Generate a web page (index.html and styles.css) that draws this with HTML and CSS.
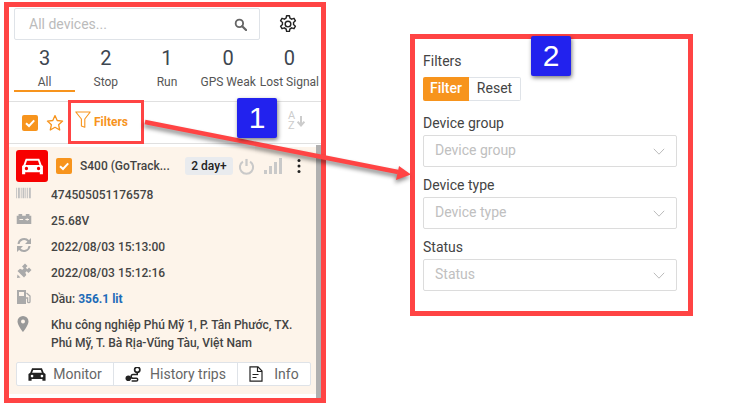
FILE: index.html
```html
<!DOCTYPE html>
<html lang="vi">
<head>
<meta charset="utf-8">
<title>Device filters</title>
<link rel="stylesheet" href="styles.css">
</head>
<body>
<section class="frame left-frame">
  <div class="search-row">
    <div class="search">
      <span class="search-text">All devices...</span>
      <svg class="search-icon" viewBox="0 0 14 14" width="13" height="13"><circle cx="5.800" cy="5.800" r="4" fill="none" stroke="#666" stroke-width="2"/><path d="M8.800 8.800 13 13" stroke="#666" stroke-width="2.400" stroke-linecap="round"/></svg>
    </div>
    <div class="gear-wrap">
      <svg viewBox="0 0 24 24" width="20" height="20" fill="none" stroke="#222" stroke-width="1.700" stroke-linejoin="round"><circle cx="12" cy="12" r="3.400"/><path d="M10.300 2h3.400l.6 3a7.400 7.400 0 0 1 2 1.200l2.900-1 1.700 3-2.300 2a7.400 7.400 0 0 1 0 2.400l2.300 2-1.700 3-2.900-1a7.400 7.400 0 0 1-2 1.200l-.6 3h-3.400l-.6-3a7.400 7.400 0 0 1-2-1.200l-2.900 1-1.700-3 2.300-2a7.400 7.400 0 0 1 0-2.400l-2.300-2 1.700-3 2.900 1a7.400 7.400 0 0 1 2-1.200z"/></svg>
    </div>
  </div>
  <div class="tabs">
    <div class="tab active"><b>3</b><span>All</span></div>
    <div class="tab"><b>2</b><span>Stop</span></div>
    <div class="tab"><b>1</b><span>Run</span></div>
    <div class="tab"><b>0</b><span>GPS Weak</span></div>
    <div class="tab"><b>0</b><span>Lost Signal</span></div>
  </div>
  <div class="toolbar">
    <span class="check"><svg viewBox="0 0 16 16" width="16" height="16"><path d="M4 8.200 7 11l5.200-5.600" fill="none" stroke="#fff" stroke-width="2"/></svg></span>
    <svg class="star" viewBox="0 0 18 18" width="18" height="18"><path d="M9 1.600 11.200 6.500 16.600 7.100 12.600 10.700 13.700 16 9 13.300 4.300 16 5.400 10.700 1.400 7.100 6.800 6.500Z" fill="none" stroke="#f7941d" stroke-width="1.300" stroke-linejoin="round"/></svg>
    <div class="filters-btn">
      <svg viewBox="0 0 16 18" width="16" height="18"><path d="M.8 1h14.400L9.800 8v8.200L6.400 15V8Z" fill="none" stroke="#f7941d" stroke-width="1.100" stroke-linejoin="round"/></svg>
      <span>Filters</span>
    </div>
    <div class="sort">
      <div class="sort-letters"><span>A</span><span>Z</span></div>
      <svg viewBox="0 0 8 11" width="8" height="11"><path d="M4 0v9.500M.6 5.800 4 9.500l3.400-3.700" fill="none" stroke="#ccc" stroke-width="2"/></svg>
    </div>
  </div>
  <div class="list">
    <article class="card">
      <div class="card-head">
        <span class="car-tile"><svg viewBox="0 0 24 24" width="25" height="25"><path fill="#fff" d="M5.500 4.500h13l2.200 6 1.300 1v8h-3v-2H5v2H2v-8l1.300-1zM6.700 6.500 5.300 10.500h13.400l-1.400-4zM6.200 12.300a1.600 1.600 0 1 0 0 3.200 1.600 1.600 0 0 0 0-3.200zm11.600 0a1.600 1.600 0 1 0 0 3.200 1.600 1.600 0 0 0 0-3.200z"/></svg></span>
        <span class="check card-check"><svg viewBox="0 0 16 16" width="16" height="16"><path d="M4 8.200 7 11l5.200-5.600" fill="none" stroke="#fff" stroke-width="2"/></svg></span>
        <span class="name">S400 (GoTrack...</span>
        <span class="badge">2 day+</span>
        <svg class="power" viewBox="0 0 18 18" width="17" height="17"><path d="M5.200 3.800a7 7 0 1 0 7.600 0" fill="none" stroke="#c9c9c9" stroke-width="2.200"/><path d="M9 1v7.500" stroke="#c9c9c9" stroke-width="2.400"/></svg>
        <svg class="signal" viewBox="0 0 18 16" width="18" height="16"><path fill="#c9c9c9" d="M0 12h3v4H0zM5 8h3v8H5zM10 4h3v12h-3zM15 0h3v16h-3z"/></svg>
        <svg class="dots" viewBox="0 0 4 16" width="4" height="16"><circle cx="2" cy="2.500" r="1.500" fill="#222"/><circle cx="2" cy="8" r="1.500" fill="#222"/><circle cx="2" cy="13.500" r="1.500" fill="#222"/></svg>
      </div>
      <div class="row">
        <svg viewBox="0 0 16 12" width="15" height="11"><path fill="#c0c0c0" d="M0 0h1v12H0zM2 0h2v12H2zM5 0h1v12H5zM7 0h2v12H7zM10 0h1v12h-1zM12 0h1v12h-1zM14 0h2v12h-2z"/></svg>
        <span>474505051176578</span>
      </div>
      <div class="row">
        <svg viewBox="0 0 16 11" width="16" height="10"><path fill="#aaa" d="M2 0h4v2h4V0h4v2h2v9H0V2h2zM3 5.500v1h4v-1zm8-.8v.8H9.500v1H11v.8h1v-.8h1.500v-1H12v-.8z"/></svg>
        <span>25.68V</span>
      </div>
      <div class="row">
        <svg viewBox="0 0 16 16" width="16" height="16"><path d="M2.500 7A5.600 5.600 0 0 1 12.400 4L14 5.500M13.500 9A5.600 5.600 0 0 1 3.600 12L2 10.500" fill="none" stroke="#aaa" stroke-width="2"/><path fill="#aaa" d="M15 1v6H9zM1 15V9h6z"/></svg>
        <span>2022/08/03 15:13:00</span>
      </div>
      <div class="row">
        <svg viewBox="0 0 16 16" width="16" height="16"><path fill="#aaa" d="M9 .5 11.500 3 9.800 4.700l1.500 1.500L13 4.500 15.500 7l-3 3-1.800-1.800-1.400 1.400 1 2.400L8 14.500 1.500 8l2.500-2.300 2.400 1 1.400-1.400L6 3.500zM1.500 11.500 4.500 14.500 1 15z"/></svg>
        <span>2022/08/03 15:12:16</span>
      </div>
      <div class="row">
        <svg viewBox="0 0 16 14" width="16" height="14"><path fill="#aaa" d="M1 0h9v14H1zM3 2v4h5V2z"/><path d="M10.500 3 14 6v5.500a1.200 1.200 0 0 1-2.400 0V8H10" fill="none" stroke="#aaa" stroke-width="1.300"/></svg>
        <span>Dầu: <em class="fuel">356.1 lit</em></span>
      </div>
      <div class="row address">
        <svg viewBox="0 0 12 16" width="12" height="16"><path fill-rule="evenodd" fill="#999" d="M6 0a5.500 5.500 0 0 1 5.500 5.500C11.500 9.500 6 16 6 16S.5 9.500.5 5.500A5.500 5.500 0 0 1 6 0zm0 3.500a2 2 0 1 0 0 4 2 2 0 0 0 0-4z"/></svg>
        <span>Khu công nghiệp Phú Mỹ 1, P. Tân Phước, TX. Phú Mỹ, T. Bà Rịa-Vũng Tàu, Việt Nam</span>
      </div>
      <div class="actions">
        <div class="action a1">
          <svg viewBox="0 0 20 16" width="18" height="15"><path fill="#222" d="M4.500 1h11l2 5 2 1.500V15h-3.500v-2h-12v2H.5V7.500l2-1.500zM5.800 3 4.600 6h10.800l-1.200-3zM4.500 8.200a1.500 1.500 0 1 0 0 3 1.500 1.500 0 0 0 0-3zm11 0a1.500 1.500 0 1 0 0 3 1.500 1.500 0 0 0 0-3z"/></svg>
          <span>Monitor</span>
        </div>
        <div class="action a2">
          <svg viewBox="0 0 18 16" width="17" height="15"><circle cx="3.500" cy="12" r="3" fill="#222"/><circle cx="13" cy="3" r="2.800" fill="none" stroke="#222" stroke-width="1.800"/><path d="M13 6v2H8.500a2 2 0 0 0 0 4h3.500a1.500 1.500 0 0 1 0 3H7" fill="none" stroke="#222" stroke-width="1.600"/></svg>
          <span>History trips</span>
        </div>
        <div class="action a3">
          <svg viewBox="0 0 14 16" width="14" height="16"><path d="M1 .8h8L13 5v10.200H1zM8.500 1v4.500H13M3.500 8.500h6M3.500 11.500h4" fill="none" stroke="#222" stroke-width="1.200"/></svg>
          <span>Info</span>
        </div>
      </div>
    </article>
  </div>
</section>

<section class="frame right-frame">
  <div class="field-label first">Filters</div>
  <div class="btn-group"><span class="btn on">Filter</span><span class="btn">Reset</span></div>
  <div class="field-label">Device group</div>
  <div class="select"><span>Device group</span><svg viewBox="0 0 12 7" width="12" height="7"><path d="M.8.8 6 6.200 11.200.8" fill="none" stroke="#bbb"/></svg></div>
  <div class="field-label">Device type</div>
  <div class="select"><span>Device type</span><svg viewBox="0 0 12 7" width="12" height="7"><path d="M.8.8 6 6.200 11.200.8" fill="none" stroke="#bbb"/></svg></div>
  <div class="field-label">Status</div>
  <div class="select"><span>Status</span><svg viewBox="0 0 12 7" width="12" height="7"><path d="M.8.8 6 6.200 11.200.8" fill="none" stroke="#bbb"/></svg></div>
</section>

<svg class="arrow" viewBox="0 0 729 412" width="729" height="412">
  <g class="arrow-shadow"><path d="M145 122 398 172" stroke="#ff4444" stroke-width="4.500" fill="none"/><path d="M411 174.500 396 180 399 166Z" fill="#ff4444"/></g>
</svg>
<div class="num n1">1</div>
<div class="num n2">2</div>
</body>
</html>
```
FILE: styles.css
```css
* { box-sizing: border-box; }
html, body { margin: 0; padding: 0; }
body {
  position: relative;
  width: 729px;
  height: 412px;
  overflow: hidden;
  background: #fff;
  font-family: Roboto, "Liberation Sans", sans-serif;
  color: #444;
}
.frame {
  position: absolute;
  border: 5px solid #ff4444;
  background: #fff;
}
.left-frame {
  left: 4px;
  top: 2px;
  width: 322px;
  height: 401px;
  display: flex;
  flex-direction: column;
}
.right-frame {
  left: 410px;
  top: 34px;
  width: 283px;
  height: 282px;
  padding: 0 11px 0 8px;
}

/* search */
.search-row { display: flex; align-items: center; padding: 1px 0 0 5px; }
.search {
  width: 246px;
  height: 32px;
  border: 1px solid #dfe3e8;
  border-radius: 2px;
  display: flex;
  align-items: center;
  justify-content: space-between;
  padding: 0 12px 0 14px;
}
.search-text { font-size: 14px; color: #bbb; }
.gear-wrap { width: 56px; display: flex; justify-content: center; }

/* tabs */
.tabs {
  display: flex;
  margin-top: 5px;
  padding: 0 0 9px 5px;
  border-bottom: 1px solid #e0e0e0;
}
.tab {
  width: 61.200px;
  height: 47px;
  display: flex;
  flex-direction: column;
  align-items: center;
  white-space: nowrap;
  border-bottom: 2px solid transparent;
}
.tab b { font-weight: 400; font-size: 20px; line-height: 24px; margin-top: 1px; color: #3d4650; }
.tab span { font-size: 12px; line-height: 14px; margin-top: 5px; color: #555; }
.tab.active { border-bottom-color: #f7941d; }

/* toolbar */
.toolbar {
  display: flex;
  align-items: center;
  height: 42px;
  padding-left: 13px;
  border-bottom: 1px solid #e0e0e0;
}
.check {
  width: 16px;
  height: 16px;
  background: #f7941d;
  border-radius: 2px;
  flex: none;
  display: block;
}
.check svg { display: block; }
.star { margin-left: 8px; }
.filters-btn {
  display: flex;
  align-items: center;
  gap: 3px;
  width: 76px;
  height: 44px;
  margin: -2px 0 0 4px;
  padding-left: 4px;
  border: 3px solid #ff4444;
  flex: none;
}
.filters-btn svg { margin-top: -3px; }
.filters-btn span { font-size: 12px; font-weight: 700; color: #f7941d; }
.sort {
  display: flex;
  align-items: center;
  gap: 2px;
  margin: -3px 0 0 144px;
}
.sort-letters {
  display: flex;
  flex-direction: column;
  font-size: 11px;
  line-height: 10px;
  color: #ccc;
}

/* list */
.list {
  flex: 1;
  margin-top: 1px;
  padding: 2px 5px 4px 0;
  background: linear-gradient(#b0b0b0, #b0b0b0) right top / 5px 100% no-repeat;
  min-height: 0;
}
.card { background: #fdf4ea; height: 100%; padding: 3px 5px 0 7px; }
.card-head { display: flex; align-items: center; height: 32px; }
.car-tile {
  width: 32px;
  height: 32px;
  background: #f70000;
  border-radius: 3px;
  display: flex;
  align-items: center;
  justify-content: center;
  flex: none;
}
.card-check { margin-left: 8px; }
.name { margin-left: 8px; width: 105px; font-size: 12px; font-weight: 500; color: #444; white-space: nowrap; }
.badge {
  width: 48px;
  height: 18px;
  background: #e9ebee;
  border-radius: 3px;
  font-size: 12px;
  font-weight: 500;
  line-height: 18px;
  text-align: center;
  color: #222;
  flex: none;
}
.power { margin-left: 5px; flex: none; }
.signal { margin-left: 9px; flex: none; }
.dots { margin-left: 15px; flex: none; }

.row {
  display: flex;
  align-items: center;
  height: 26px;
  font-size: 12px;
  font-weight: 500;
  color: #444;
  position: relative;
  padding-left: 35px;
}
.row svg { position: absolute; left: 0; top: 50%; transform: translateY(calc(-50% - 2px)); }
.fuel { font-style: normal; color: #1e6bb8; font-weight: 700; }
.address { height: 37px; align-items: flex-start; padding-top: 4px; line-height: 18px; }
.address svg { left: 1px; top: 4px; transform: none; }
.actions {
  display: flex;
  height: 24px;
  margin-top: 13px;
  background: #fff;
  border: 1px solid #dfe3e8;
  border-radius: 2px;
  width: 295px;
}
.action {
  display: flex;
  align-items: center;
  justify-content: center;
  gap: 7px;
  font-size: 14px;
  color: #666;
  border-right: 1px solid #dfe3e8;
}
.action:last-child { border-right: 0; }
.a1 { width: 97px; }
.a2 { width: 124px; gap: 8px; }
.a3 { flex: 1; gap: 11px; }

/* right panel */
.field-label { font-size: 14px; line-height: 16px; color: #444; margin-top: 10px; }
.field-label.first { margin-top: 14px; }
.btn-group {
  display: flex;
  margin-top: 8px;
  width: 98px;
  height: 24px;
}
.btn {
  flex: 1;
  border: 1px solid #dfe3e8;
  border-left: 0;
  border-radius: 0 2px 2px 0;
  font-size: 14px;
  line-height: 20px;
  text-align: center;
  color: #444;
}
.btn.on {
  flex: none;
  width: 46px;
  background: #f7941d;
  border: 0;
  border-radius: 2px 0 0 2px;
  font-weight: 500;
  line-height: 22px;
  color: #fff;
}
.btn-group + .field-label { margin-top: 14px; }
.select {
  width: 254px;
  height: 32px;
  margin-top: 4px;
  border: 1px solid #dcdcdc;
  border-radius: 2px;
  display: flex;
  align-items: center;
  justify-content: space-between;
  padding: 0 11px 2px 11px;
  font-size: 14px;
  color: #c0c0c0;
}
.select svg { margin-top: 2px; }

/* annotations */
.arrow { position: absolute; left: 0; top: 0; pointer-events: none; }
.arrow-shadow { filter: drop-shadow(-1px 3px 2px rgba(0,0,0,.45)); }
.num {
  position: absolute;
  width: 40px;
  height: 40px;
  background: #2222ee;
  border-radius: 2px;
  box-shadow: 1px 2px 4px rgba(0,0,0,.5);
  color: #fff;
  font-size: 30px;
  line-height: 40px;
  text-align: center;
  font-family: "Liberation Sans", Roboto, sans-serif;
}
.n1 { left: 237px; top: 98px; }
.n2 { left: 531px; top: 36px; }
```
